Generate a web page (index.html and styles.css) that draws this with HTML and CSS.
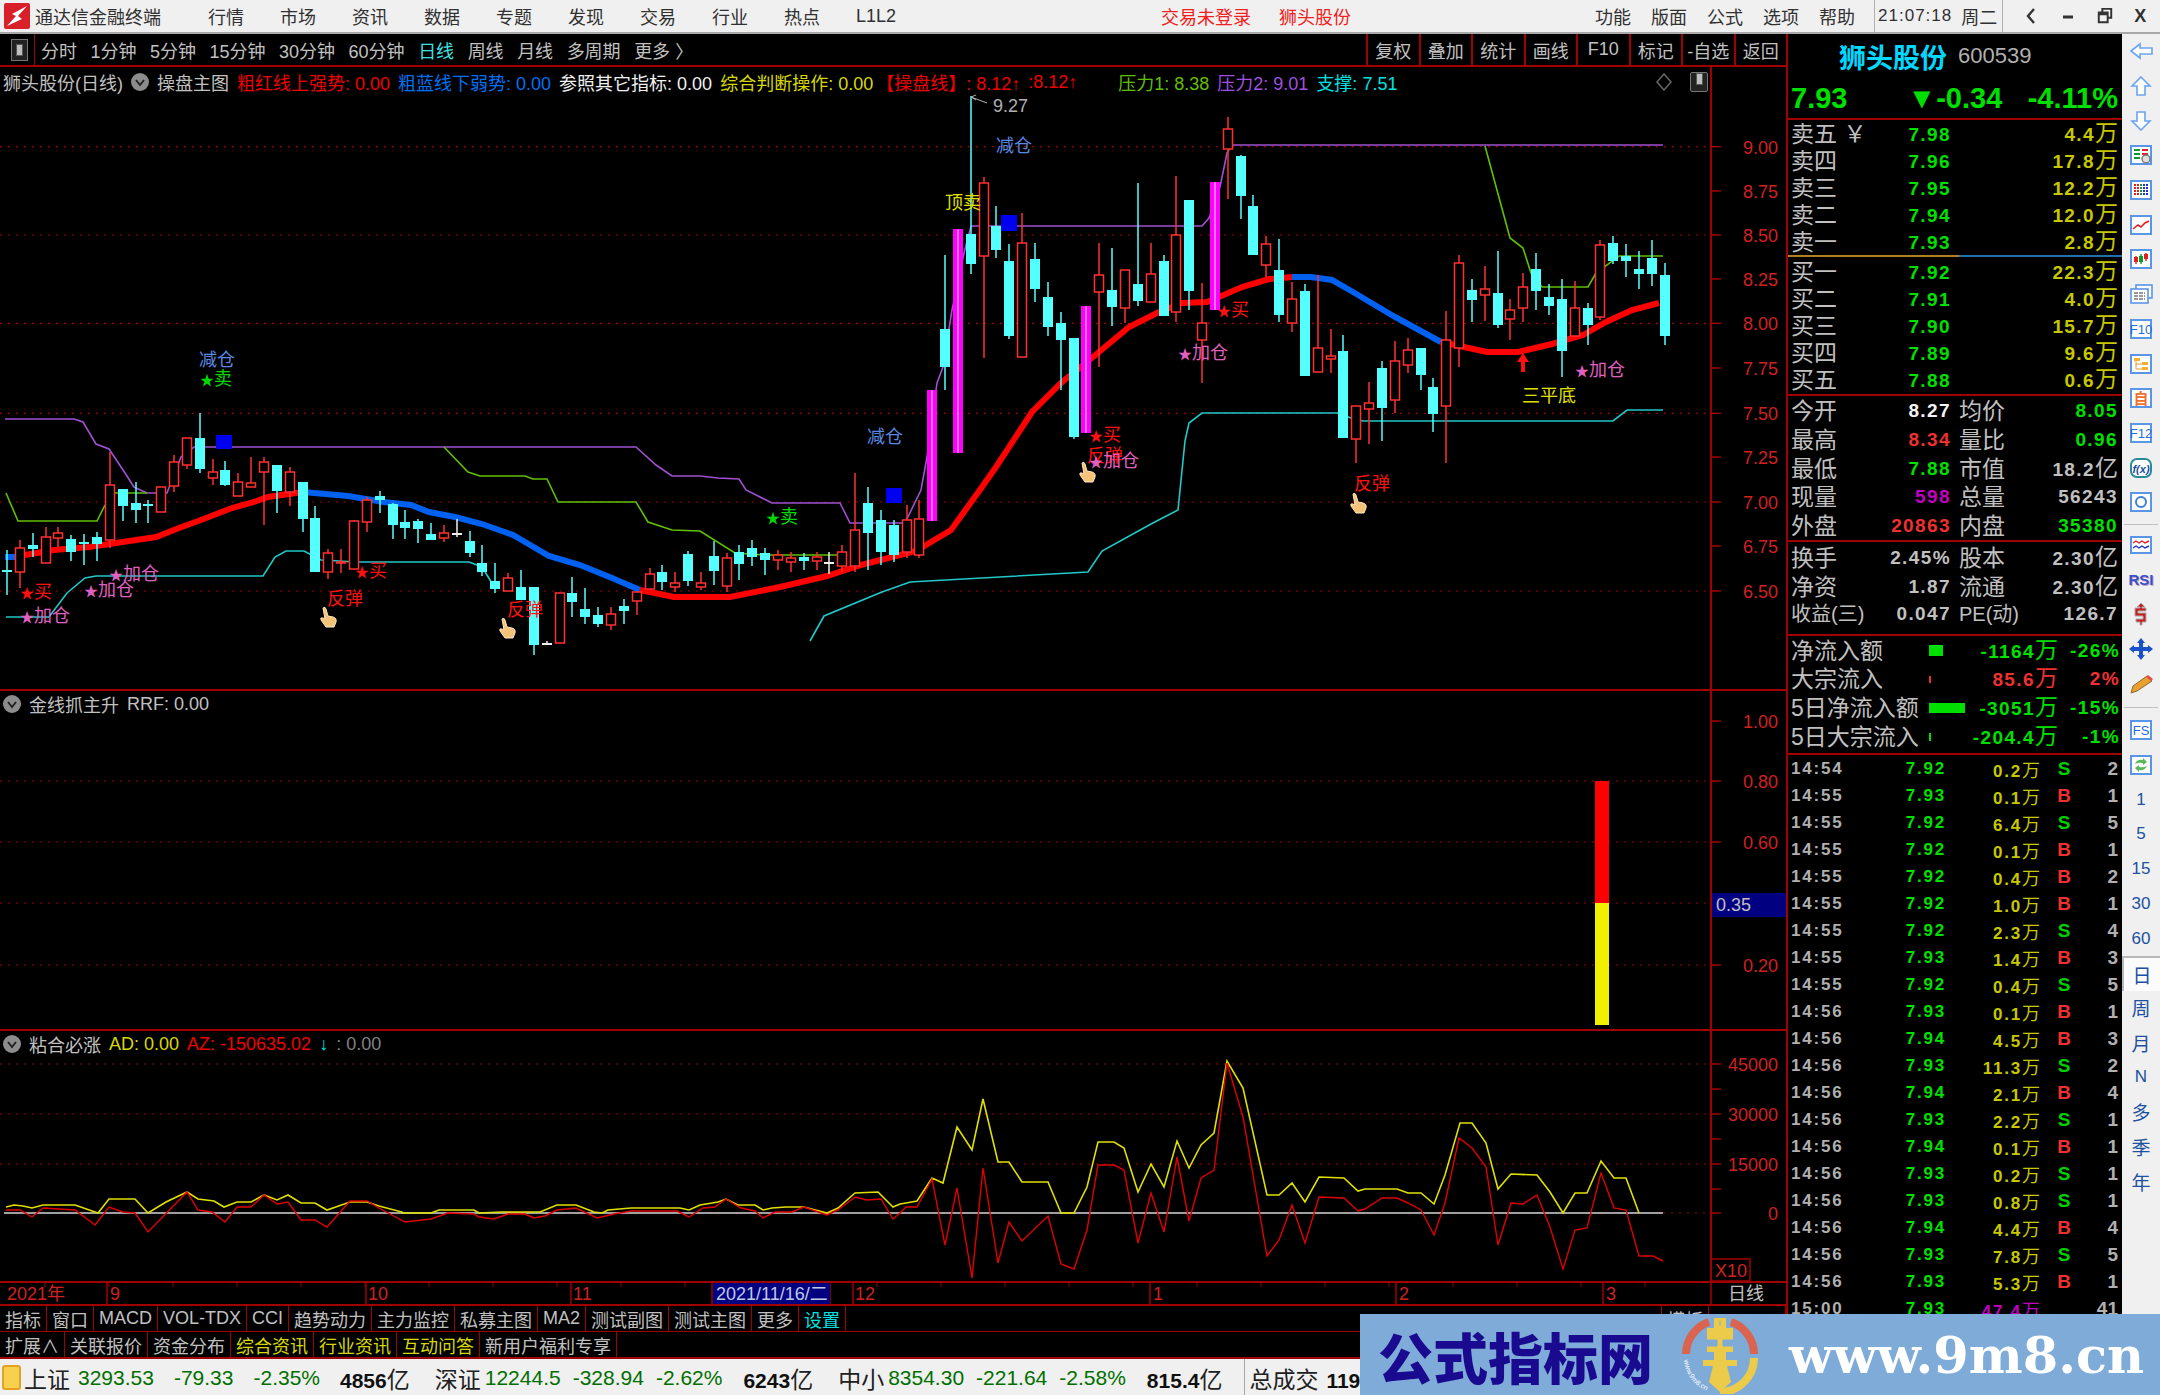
FILE: index.html
```html
<!DOCTYPE html>
<html>
<head>
    <title>通达信金融终端 - 狮头股份</title>
    <link rel="stylesheet" href="styles.css">
</head>
<body>
    <!-- Title bar -->
    <header class="topbar">
        <svg class="logo" viewBox="0 0 26 26">
            <rect width="26" height="26" rx="2" fill="#d8202a"/>
            <path d="M23 3 L8 11 L12 13 L3 23 L18 16 L14 13 Z" fill="#fff"/>
        </svg>
        <span class="app-name">通达信金融终端</span>
        <nav class="menu">
            <span>行情</span><span>市场</span><span>资讯</span><span>数据</span><span>专题</span>
            <span>发现</span><span>交易</span><span>行业</span><span>热点</span><span>L1L2</span>
        </nav>
        <span class="login">交易未登录</span>
        <span class="login stock">狮头股份</span>
        <nav class="menu menu-right">
            <span>功能</span><span>版面</span><span>公式</span><span>选项</span><span>帮助</span>
        </nav>
        <div class="clock">
            <span class="clock-time">21:07:18</span>
            <span>周二</span>
        </div>
        <div class="win-btns">
            <svg viewBox="0 0 14 20"><path d="M10 3 L4 10 L10 17" fill="none" stroke="#333" stroke-width="2.4"/></svg>
            <svg viewBox="0 0 14 20"><path d="M2 11 H12" stroke="#333" stroke-width="3"/></svg>
            <svg viewBox="0 0 18 20"><path d="M6 5 V2 H16 V12 H13 M2 6 H12 V17 H2 Z M2 8 H12" fill="none" stroke="#333" stroke-width="2.2"/></svg>
            <span>X</span>
        </div>
    </header>

    <div class="workspace">
        <!-- Chart side -->
        <main class="left">
            <div class="toolbar">
                <div class="toggle"><i></i></div>
                <div class="periods">
                    <span>分时</span><span>1分钟</span><span>5分钟</span><span>15分钟</span><span>30分钟</span><span>60分钟</span>
                    <span class="on">日线</span><span>周线</span><span>月线</span><span>多周期</span><span>更多 〉</span>
                </div>
                <div class="tool-btns">
                    <span>复权</span><span>叠加</span><span>统计</span><span>画线</span><span>F10</span><span>标记</span><span>-自选</span><span>返回</span>
                </div>
            </div>

            <section class="pane pane-main">
                <svg id="chart-main" class="plot" viewBox="0 67 1786 622"></svg>
                <div class="legend">
                    <span>狮头股份(日线)</span>
                    <svg class="chev" viewBox="0 0 18 18"><circle cx="9" cy="9" r="9" fill="#8c8c8c"/><path d="M5 7 L9 12 L13 7" fill="none" stroke="#222" stroke-width="2"/></svg>
                    <span>操盘主图</span>
                    <span class="red">粗红线上强势: 0.00</span>
                    <span class="blue">粗蓝线下弱势: 0.00</span>
                    <span class="white">参照其它指标: 0.00</span>
                    <span class="yellow">综合判断操作: 0.00</span>
                    <span class="red lead">【操盘线】: 8.12<b>↑</b></span>
                    <span class="red">:8.12<b>↑</b></span>
                    <span class="green far">压力1: 8.38</span>
                    <span class="purple">压力2: 9.01</span>
                    <span class="cyan">支撑: 7.51</span>
                    <svg class="diamond" viewBox="0 0 18 18"><path d="M9 1 L16 9 L9 17 L2 9 Z" fill="none" stroke="#666" stroke-width="1.5"/></svg>
                    <div class="toggle-sm"><i></i></div>
                </div>
            </section>

            <section class="pane pane-mid">
                <svg id="chart-mid" class="plot" viewBox="0 691 1786 338"></svg>
                <div class="legend legend-sub">
                    <svg class="chev" viewBox="0 0 18 18"><circle cx="9" cy="9" r="9" fill="#8c8c8c"/><path d="M5 7 L9 12 L13 7" fill="none" stroke="#222" stroke-width="2"/></svg>
                    <span>金线抓主升</span>
                    <span>RRF: 0.00</span>
                </div>
            </section>

            <section class="pane pane-low">
                <svg id="chart-low" class="plot" viewBox="0 1031 1786 250"></svg>
                <div class="legend legend-sub">
                    <svg class="chev" viewBox="0 0 18 18"><circle cx="9" cy="9" r="9" fill="#8c8c8c"/><path d="M5 7 L9 12 L13 7" fill="none" stroke="#222" stroke-width="2"/></svg>
                    <span>粘合必涨</span>
                    <span class="yellow">AD: 0.00</span>
                    <span class="red">AZ: -150635.02</span>
                    <span class="cyan"><b>↓</b></span>
                    <span class="dim">: 0.00</span>
                </div>
            </section>

            <svg id="date-axis" class="date-axis" viewBox="0 0 1786 21"></svg>

            <div class="tabs">
                <span>指标</span><span>窗口</span><span>MACD</span><span>VOL-TDX</span><span>CCI</span><span>趋势动力</span><span>主力监控</span>
                <span>私募主图</span><span>MA2</span><span>测试副图</span><span>测试主图</span><span>更多</span><span class="cyan">设置</span>
                <span class="tab-end">模板</span><span class="tab-blank"></span>
            </div>
            <div class="tabs tabs-low">
                <span>扩展∧</span><span>关联报价</span><span>资金分布</span><span class="yellow">综合资讯</span><span class="yellow">行业资讯</span>
                <span class="yellow">互动问答</span><span>新用户福利专享</span>
            </div>

            <footer class="status">
                <div class="status-ico"></div>
                <div class="idx"><em>上证</em><span>3293.53</span><span>-79.33</span><span>-2.35%</span><b>4856<em>亿</em></b></div>
                <div class="idx idx-tight"><em>深证</em><span>12244.5</span><span>-328.94</span><span>-2.62%</span><b>6243<em>亿</em></b></div>
                <div class="idx idx-tight"><em>中小</em><span>8354.30</span><span>-221.64</span><span>-2.58%</span><b>815.4<em>亿</em></b></div>
                <div class="idx idx-total"><em>总成交</em><b>1190<em>亿</em></b></div>
            </footer>
        </main>

        <!-- Quote panel -->
        <aside class="quote">
            <div class="q-name">狮头股份<span>600539</span></div>
            <div class="q-price">
                <span>7.93</span><span class="q-change">▼-0.34</span><span class="q-pct">-4.11%</span>
            </div>

            <div class="book">
                <div class="row"><span>卖五 ￥</span><b class="up-g">7.98</b><b class="vol">4.4<i>万</i></b></div>
                <div class="row"><span>卖四</span><b class="up-g">7.96</b><b class="vol">17.8<i>万</i></b></div>
                <div class="row"><span>卖三</span><b class="up-g">7.95</b><b class="vol">12.2<i>万</i></b></div>
                <div class="row"><span>卖二</span><b class="up-g">7.94</b><b class="vol">12.0<i>万</i></b></div>
                <div class="row"><span>卖一</span><b class="up-g">7.93</b><b class="vol">2.8<i>万</i></b></div>
            </div>
            <div class="book-sep"></div>
            <div class="book book-end">
                <div class="row"><span>买一</span><b class="up-g">7.92</b><b class="vol">22.3<i>万</i></b></div>
                <div class="row"><span>买二</span><b class="up-g">7.91</b><b class="vol">4.0<i>万</i></b></div>
                <div class="row"><span>买三</span><b class="up-g">7.90</b><b class="vol">15.7<i>万</i></b></div>
                <div class="row"><span>买四</span><b class="up-g">7.89</b><b class="vol">9.6<i>万</i></b></div>
                <div class="row"><span>买五</span><b class="up-g">7.88</b><b class="vol">0.6<i>万</i></b></div>
            </div>

            <div class="stats">
                <div class="stat"><span>今开</span><b class="white">8.27</b><span>均价</span><b class="up-g">8.05</b></div>
                <div class="stat"><span>最高</span><b class="hot">8.34</b><span>量比</span><b class="up-g">0.96</b></div>
                <div class="stat"><span>最低</span><b class="up-g">7.88</b><span>市值</span><b>18.2<i>亿</i></b></div>
                <div class="stat"><span>现量</span><b class="mag">598</b><span>总量</span><b>56243</b></div>
                <div class="stat"><span>外盘</span><b class="hot">20863</b><span>内盘</span><b class="up-g">35380</b></div>
            </div>
            <div class="stats stats-b">
                <div class="stat"><span>换手</span><b>2.45%</b><span>股本</span><b>2.30<i>亿</i></b></div>
                <div class="stat"><span>净资</span><b>1.87</b><span>流通</span><b>2.30<i>亿</i></b></div>
                <div class="stat"><span class="small">收益(三)</span><b>0.047</b><span class="small">PE(动)</span><b>126.7</b></div>
            </div>

            <div class="flows">
                <div class="flow"><span>净流入额</span><u class="bar bar-a"></u><b class="up-g">-1164<i>万</i></b><b class="up-g">-26%</b></div>
                <div class="flow"><span>大宗流入</span><u class="bar bar-b"></u><b class="hot">85.6<i>万</i></b><b class="hot">2%</b></div>
                <div class="flow"><span>5日净流入额</span><u class="bar bar-c"></u><b class="up-g">-3051<i>万</i></b><b class="up-g">-15%</b></div>
                <div class="flow"><span>5日大宗流入</span><u class="bar bar-d"></u><b class="up-g">-204.4<i>万</i></b><b class="up-g">-1%</b></div>
            </div>

            <div class="ticks">
                <div class="tick"><span>14:54</span><b>7.92</b><em>0.2<i>万</i></em><s>S</s><span>2</span></div>
                <div class="tick"><span>14:55</span><b>7.93</b><em>0.1<i>万</i></em><s class="buy">B</s><span>1</span></div>
                <div class="tick"><span>14:55</span><b>7.92</b><em>6.4<i>万</i></em><s>S</s><span>5</span></div>
                <div class="tick"><span>14:55</span><b>7.92</b><em>0.1<i>万</i></em><s class="buy">B</s><span>1</span></div>
                <div class="tick"><span>14:55</span><b>7.92</b><em>0.4<i>万</i></em><s class="buy">B</s><span>2</span></div>
                <div class="tick"><span>14:55</span><b>7.92</b><em>1.0<i>万</i></em><s class="buy">B</s><span>1</span></div>
                <div class="tick"><span>14:55</span><b>7.92</b><em>2.3<i>万</i></em><s>S</s><span>4</span></div>
                <div class="tick"><span>14:55</span><b>7.93</b><em>1.4<i>万</i></em><s class="buy">B</s><span>3</span></div>
                <div class="tick"><span>14:55</span><b>7.92</b><em>0.4<i>万</i></em><s>S</s><span>5</span></div>
                <div class="tick"><span>14:56</span><b>7.93</b><em>0.1<i>万</i></em><s class="buy">B</s><span>1</span></div>
                <div class="tick"><span>14:56</span><b>7.94</b><em>4.5<i>万</i></em><s class="buy">B</s><span>3</span></div>
                <div class="tick"><span>14:56</span><b>7.93</b><em>11.3<i>万</i></em><s>S</s><span>2</span></div>
                <div class="tick"><span>14:56</span><b>7.94</b><em>2.1<i>万</i></em><s class="buy">B</s><span>4</span></div>
                <div class="tick"><span>14:56</span><b>7.93</b><em>2.2<i>万</i></em><s>S</s><span>1</span></div>
                <div class="tick"><span>14:56</span><b>7.94</b><em>0.1<i>万</i></em><s class="buy">B</s><span>1</span></div>
                <div class="tick"><span>14:56</span><b>7.93</b><em>0.2<i>万</i></em><s>S</s><span>1</span></div>
                <div class="tick"><span>14:56</span><b>7.93</b><em>0.8<i>万</i></em><s>S</s><span>1</span></div>
                <div class="tick"><span>14:56</span><b>7.94</b><em>4.4<i>万</i></em><s class="buy">B</s><span>4</span></div>
                <div class="tick"><span>14:56</span><b>7.93</b><em>7.8<i>万</i></em><s>S</s><span>5</span></div>
                <div class="tick"><span>14:56</span><b>7.93</b><em>5.3<i>万</i></em><s class="buy">B</s><span>1</span></div>
                <div class="tick"><span>15:00</span><b>7.93</b><em class="mag">47.4<i>万</i></em><s></s><span>41</span></div>
            </div>
        </aside>

        <!-- Right icon strip -->
        <nav class="side">
            <div class="side-item"><svg viewBox="0 0 26 24"><path d="M3 12 L12 5 V9 H24 V15 H12 V19 Z" fill="#fff" stroke="#6aa4f2" stroke-width="1.6"/></svg></div>
            <div class="side-item"><svg viewBox="0 0 26 24"><path d="M13 3 L22 12 H17 V21 H9 V12 H4 Z" fill="#fff" stroke="#6aa4f2" stroke-width="1.6"/></svg></div>
            <div class="side-item"><svg viewBox="0 0 26 24"><path d="M13 21 L22 12 H17 V3 H9 V12 H4 Z" fill="#fff" stroke="#6aa4f2" stroke-width="1.6"/></svg></div>
            <div class="side-item"><svg viewBox="0 0 26 24"><rect x="3" y="3" width="20" height="18" fill="#fff" stroke="#5a96e8" stroke-width="2"/><path d="M6 7 H12 M6 11 H12 M6 15 H12" stroke="#0a9a30" stroke-width="2"/><path d="M14 7 H20 M14 11 H20" stroke="#e02020" stroke-width="2"/><circle cx="18" cy="16" r="4" fill="#ddd" stroke="#777" stroke-width="1.4"/></svg></div>
            <div class="side-item"><svg viewBox="0 0 26 24"><rect x="3" y="3" width="20" height="18" fill="#fff" stroke="#5a96e8" stroke-width="2"/><path d="M7 6 V18 M10 6 V18" stroke="#e02020" stroke-width="2" stroke-dasharray="2 1"/><path d="M13 6 V18" stroke="#0a9a30" stroke-width="2" stroke-dasharray="2 1"/><path d="M16 6 V18 M19 6 V18" stroke="#2030d0" stroke-width="2" stroke-dasharray="2 1"/></svg></div>
            <div class="side-item"><svg viewBox="0 0 26 24"><rect x="3" y="3" width="20" height="18" fill="#fff" stroke="#5a96e8" stroke-width="2"/><path d="M5 16 L10 12 L13 14 L17 10 L21 8" fill="none" stroke="#e02020" stroke-width="1.6"/></svg></div>
            <div class="side-item"><svg viewBox="0 0 26 24"><rect x="3" y="3" width="20" height="18" fill="#fff" stroke="#5a96e8" stroke-width="2"/><path d="M8 9 V17 M18 6 V14" stroke="#e02020" stroke-width="1.4"/><path d="M13 7 V17" stroke="#0a9a30" stroke-width="1.4"/><rect x="6" y="10" width="4" height="5" fill="#e02020"/><rect x="11" y="9" width="4" height="6" fill="#0a9a30"/><rect x="16" y="7" width="4" height="5" fill="#e02020"/></svg></div>
            <div class="side-item"><svg viewBox="0 0 26 24"><rect x="8" y="3" width="16" height="13" fill="#fff" stroke="#5a96e8" stroke-width="1.6"/><rect x="3" y="7" width="17" height="14" fill="#fff" stroke="#5a96e8" stroke-width="1.6"/><path d="M6 11 H17 M6 14 H17 M6 17 H17" stroke="#777" stroke-width="1.4" stroke-dasharray="4 1"/></svg></div>
            <div class="side-item"><svg viewBox="0 0 26 24"><rect x="3" y="3" width="20" height="18" fill="#fff" stroke="#5a96e8" stroke-width="2"/><text x="13" y="17" class="ico-text">F10</text></svg></div>
            <div class="side-item"><svg viewBox="0 0 26 24"><rect x="3" y="3" width="20" height="18" fill="#fff" stroke="#5a96e8" stroke-width="2"/><path d="M8 8 V17 H14 M8 12 H14" fill="none" stroke="#e0a030"/><rect x="6" y="6" width="6" height="3" fill="#f5b030"/><rect x="14" y="10" width="6" height="3" fill="#f5b030"/><rect x="14" y="15" width="6" height="3" fill="#f5b030"/></svg></div>
            <div class="side-item"><svg viewBox="0 0 26 24"><rect x="3" y="3" width="20" height="18" fill="#fff" stroke="#5a96e8" stroke-width="2"/><text x="13" y="18" class="ico-zi">自</text></svg></div>
            <div class="side-item"><svg viewBox="0 0 26 24"><rect x="3" y="3" width="20" height="18" fill="#fff" stroke="#5a96e8" stroke-width="2"/><text x="13" y="17" class="ico-text">F12</text></svg></div>
            <div class="side-item"><svg viewBox="0 0 26 24"><rect x="3" y="3" width="20" height="18" rx="6" fill="#fff" stroke="#2a8a9a" stroke-width="2"/><text x="13" y="17" class="ico-fx">f(x)</text></svg></div>
            <div class="side-item"><svg viewBox="0 0 26 24"><rect x="3" y="3" width="20" height="18" fill="#fff" stroke="#5a96e8" stroke-width="2"/><circle cx="13" cy="12" r="5" fill="none" stroke="#3a80d8" stroke-width="2"/></svg></div>
            <div class="side-sep"></div>
            <div class="side-item"><svg viewBox="0 0 26 24"><rect x="3" y="4" width="20" height="16" fill="#fff" stroke="#5a96e8" stroke-width="2"/><path d="M5 10 L8 8 L11 10 L14 8 L17 10 L21 8" fill="none" stroke="#e02020" stroke-width="1.4"/><path d="M5 15 L8 13 L11 15 L14 13 L17 15 L21 13" fill="none" stroke="#2030d0" stroke-width="1.4"/></svg></div>
            <div class="side-item"><span class="rsi">RSI</span></div>
            <div class="side-item"><svg viewBox="0 0 26 24"><path d="M13 1 L17 5 H14 V6 H18 V9 H10 V11 H18 V20 H14 V23 H12 V20 H8 V17 H15 V14 H7 V6 H12 V5 H9 Z" fill="#c82020" stroke="#aaa" stroke-width="1"/></svg></div>
            <div class="side-item"><svg viewBox="0 0 26 24"><path d="M13 1 L17 6 H15 V10 H20 V8 L25 12 L20 16 V14 H15 V18 H17 L13 23 L9 18 H11 V14 H6 V16 L1 12 L6 8 V10 H11 V6 H9 Z" fill="#1a50c8"/></svg></div>
            <div class="side-item"><svg viewBox="0 0 26 24"><path d="M3 21 L5 14 L19 4 L24 9 L9 19 Z" fill="#e8a030" stroke="#8a6a30"/><path d="M18 5 L20 3 L25 7 L23 9 Z" fill="#e05050"/></svg></div>
            <div class="side-sep side-sep-b"></div>
            <div class="side-item"><svg viewBox="0 0 26 24"><rect x="3" y="3" width="20" height="18" fill="#fff" stroke="#5a96e8" stroke-width="2"/><text x="13" y="17" class="ico-text">FS</text></svg></div>
            <div class="side-item"><svg viewBox="0 0 26 24"><rect x="3" y="3" width="20" height="18" fill="#fff" stroke="#5a96e8" stroke-width="2"/><path d="M7 11 Q9 6 15 7 L15 5 L19 9 L15 12 L15 10 Q10 9 7 11 Z M19 13 Q17 18 11 17 L11 19 L7 15 L11 12 L11 14 Q16 15 19 13 Z" fill="#58b858"/></svg></div>
            <div class="side-item side-num">1</div>
            <div class="side-item side-num">5</div>
            <div class="side-item side-num">15</div>
            <div class="side-item side-num">30</div>
            <div class="side-item side-num">60</div>
            <div class="side-item side-cn side-on">日</div>
            <div class="side-item side-cn">周</div>
            <div class="side-item side-cn">月</div>
            <div class="side-item side-num">N</div>
            <div class="side-item side-cn">多</div>
            <div class="side-item side-cn">季</div>
            <div class="side-item side-cn">年</div>
        </nav>
    </div>

    <!-- Site watermark over the bottom right corner -->
    <div class="mark">
        <span class="mark-name">公式指标网</span>
        <svg class="mark-logo" viewBox="0 0 78 78">
            <path d="M5 38 A34 34 0 0 1 28 6" fill="none" stroke="#d9644f" stroke-width="8"/>
            <path d="M50 6 A34 34 0 0 1 73 38" fill="none" stroke="#d9644f" stroke-width="8"/>
            <path d="M73 42 A34 34 0 0 1 39 76" fill="none" stroke="#eccb4a" stroke-width="8"/>
            <path d="M33 2 H45 V12 H52 V36 H45 V44 H56 V50 H46 L50 66 L39 76 L28 66 L32 50 H22 V44 H33 V36 H26 V12 H33 Z" fill="#eccb4a"/>
            <path d="M26 24 H36 V30 H26 Z M42 24 H52 V30 H42 Z M39 5 V10" fill="#7fabd8" stroke="#7fabd8"/>
            <path id="mark-low" d="M3 44 A36 36 0 0 0 30 76" fill="none"/>
            <text class="mark-small"><textPath href="#mark-low">www.9m8.cn</textPath></text>
        </svg>
        <span class="mark-url">www.9m8.cn</span>
    </div>

    <script src="chart.js"></script>
</body>
</html>
```

FILE: styles.css
```css
body {
    margin: 0;
    width: 2160px;
    height: 1395px;
    overflow: hidden;
    position: relative;
    background-color: #000;
    color: #c0c0c0;
    font-family: "Liberation Sans", "Noto Sans CJK SC", sans-serif;
    font-size: 18px;
}

i, em, s, u {
    font-style: normal;
    text-decoration: none;
}

/* Colours shared by legends and tabs */
.red { color: #f00000; }
.blue { color: #0070f0; }
.white { color: #f0f0f0; }
.yellow { color: #d8d800; }
.green { color: #60c000; }
.purple { color: #a050e0; }
.cyan { color: #00e0e0; }
.dim { color: #808080; }

/* Title bar */
.topbar {
    height: 32px;
    border-bottom: 2px solid #a8a8a8;
    background-color: #f0f0f0;
    color: #303030;
    display: flex;
    align-items: center;
    white-space: nowrap;
}

.logo {
    width: 26px;
    height: 26px;
    margin-left: 4px;
}

.app-name {
    margin-left: 5px;
}

.menu {
    display: flex;
    align-items: center;
    gap: 36px;
    margin-left: 47px;
}

.menu-right {
    gap: 20px;
    margin-left: 244px;
}

.login {
    color: #f02020;
    margin-left: 265px;
}

.login.stock {
    margin-left: 28px;
}

.clock {
    display: flex;
    align-items: center;
    gap: 9px;
    height: 32px;
    margin-left: 19px;
    padding: 0 5px 0 3px;
    border-left: 1px solid #b0b0b0;
    border-right: 1px solid #b0b0b0;
}

.clock-time {
    font-size: 17px;
    letter-spacing: 1px;
}

.win-btns {
    display: flex;
    align-items: center;
    gap: 21px;
    margin-left: 20px;
    font-weight: bold;
}

.win-btns svg {
    width: 16px;
    height: 20px;
}

/* Period toolbar */
.workspace {
    display: flex;
    height: 1361px;
}

.left {
    width: 1786px;
    border-right: 2px solid #a00000;
    flex-shrink: 0;
}

.toolbar {
    height: 31px;
    border-bottom: 2px solid #a00000;
    display: flex;
    align-items: center;
    white-space: nowrap;
}

.toggle {
    width: 34px;
    height: 31px;
    border-right: 1px solid #a00000;
    display: flex;
    align-items: center;
    justify-content: center;
}

.toggle i, .toggle-sm i {
    display: block;
    width: 5px;
    height: 10px;
    margin-left: 5px;
    background-color: #c0c0c0;
    border: 1px solid #555;
}

.toggle i {
    box-shadow: 0 0 0 4px #222, 0 0 0 5px #777;
}

.toggle-sm {
    width: 16px;
    height: 18px;
    margin-left: 9px;
    border: 1px solid #777;
    border-radius: 2px;
    background-color: #222;
}

.periods {
    display: flex;
    gap: 13.5px;
    margin-left: 6px;
}

.periods .on {
    color: #40e0e0;
}

.tool-btns {
    display: flex;
    margin-left: auto;
}

.tool-btns span {
    width: 52.5px;
    height: 31px;
    box-sizing: border-box;
    border-left: 2px solid #a00000;
    display: flex;
    align-items: center;
    justify-content: center;
}

/* Chart panes */
.pane {
    position: relative;
    border-bottom: 2px solid #a00000;
}

.pane-main { height: 622px; }
.pane-mid { height: 338px; }
.pane-low { height: 250px; }

.plot {
    position: absolute;
    top: 0;
    left: 0;
    width: 1786px;
    height: 100%;
}

.legend {
    position: relative;
    width: 1705px;
    height: 30px;
    padding-left: 3px;
    display: flex;
    align-items: center;
    gap: 8px;
    white-space: nowrap;
}

.legend-sub {
    height: 26px;
}

.chev {
    width: 18px;
    height: 18px;
    flex-shrink: 0;
}

.lead {
    margin-left: -5px;
}

.far {
    margin-left: 33px;
}

.diamond {
    width: 18px;
    height: 18px;
    margin-left: auto;
}

.plot text {
    font-family: "Liberation Sans", "Noto Sans CJK SC", sans-serif;
    font-size: 18px;
}

.date-axis {
    display: block;
    width: 1786px;
    height: 21px;
    border-bottom: 2px solid #a00000;
    font-size: 18px;
}

/* Bottom tabs */
.tabs {
    height: 25px;
    border-bottom: 1px solid #a00000;
    display: flex;
    white-space: nowrap;
}

.tabs span {
    padding: 0 5px;
    border-right: 1px solid #a00000;
    display: flex;
    align-items: center;
}

.tabs .tab-end {
    margin-left: auto;
    border-left: 1px solid #a00000;
}

.tabs .tab-blank {
    width: 66px;
}

.tabs-low {
    height: 25px;
    border-bottom: 2px solid #a00000;
}

.status {
    height: 37px;
    background-color: #f0f0f0;
    color: #006f00;
    font-size: 21px;
    display: flex;
    align-items: center;
    gap: 25px;
    white-space: nowrap;
}

.status-ico {
    width: 15px;
    height: 21px;
    margin-left: 2px;
    margin-right: -22px;
    border: 2px solid #e8a020;
    border-radius: 3px;
    background-color: #f8d050;
}

.idx {
    display: flex;
    align-items: center;
    gap: 20px;
}

.idx em {
    color: #202020;
    font-size: 23px;
    margin-right: -12px;
}

.idx b {
    color: #101010;
}

.idx b em {
    font-weight: normal;
    margin-right: 0;
}

.idx-tight {
    gap: 12px;
}

.idx-tight em {
    margin-right: -8px;
}

.idx-tight b {
    margin-left: 9px;
}

.idx-total {
    margin-left: -3px;
    padding-left: 4px;
    height: 37px;
    border-left: 1px solid #aaa;
}

/* Quote panel */
.quote {
    width: 334px;
    flex-shrink: 0;
    box-sizing: border-box;
    font-size: 23px;
}

.q-name {
    height: 44px;
    padding-left: 51px;
    display: flex;
    align-items: center;
    color: #00d8ff;
    font-size: 27px;
    font-weight: bold;
}

.q-name span {
    margin-left: 11px;
    color: #b0b0b0;
    font-size: 22px;
    font-weight: normal;
}

.q-price {
    height: 40px;
    padding: 0 4px 0 3px;
    border-bottom: 2px solid #a00000;
    display: flex;
    align-items: center;
    color: #00e000;
    font-size: 29px;
    font-weight: bold;
}

.q-change {
    margin-left: 60px;
}

.q-pct {
    margin-left: auto;
}

.book {
    padding: 0 4px 0 3px;
}

.book-sep {
    height: 2px;
    margin-bottom: 1px;
    background: linear-gradient(to right, #b08020 0, #b08020 171px, #2070b0 171px);
}

.book-end {
    border-bottom: 2px solid #a00000;
    padding-bottom: 1px;
    padding-top: 0;
    margin-left: 0;
    height: 135px;
}

.row {
    height: 27px;
    display: grid;
    grid-template-columns: 70px 90px 1fr;
    align-items: center;
    line-height: 27px;
    white-space: nowrap;
}

.row b, .stat b, .flow b {
    text-align: right;
    font-size: 19px;
    letter-spacing: 1.4px;
}

.row i, .stat i, .flow i {
    font-size: 23px;
    font-weight: normal;
    letter-spacing: 0;
}

.up-g { color: #00e000; }
.hot { color: #f03030; }
.mag { color: #c000c0; }
.vol { color: #c8c800; }

.stats {
    padding: 1px 4px 0 3px;
    border-bottom: 2px solid #a00000;
}

.stats-b {
    padding-bottom: 5px;
}

.stat {
    height: 28.6px;
    display: grid;
    grid-template-columns: 70px 90px 8px 60px 1fr;
    align-items: center;
    line-height: 28px;
    white-space: nowrap;
}

.stat span:nth-of-type(2) {
    grid-column: 4;
}

.stat b {
    color: #c0c0c0;
}

.stat .white { color: #f4f4f4; }
.stat .up-g { color: #00e000; }
.stat .hot { color: #f03030; }
.stat .mag { color: #c000c0; }

.small {
    font-size: 20px;
}

.flows {
    padding: 0 2px 3px 3px;
    border-bottom: 2px solid #a00000;
}

.flow {
    height: 28.6px;
    display: grid;
    grid-template-columns: 138px 36px 93px 1fr;
    align-items: center;
    line-height: 28px;
    white-space: nowrap;
}

.bar {
    display: block;
}

.bar-a { width: 14px; height: 11px; background-color: #00e000; }
.bar-b { width: 2px; height: 7px; background-color: #f03030; }
.bar-c { width: 36px; height: 10px; background-color: #00e000; }
.bar-d { width: 2px; height: 8px; background-color: #00e000; }

.tick {
    height: 27px;
    padding: 0 4px 0 3px;
    display: grid;
    grid-template-columns: 70px 85px 94px 48px 1fr;
    align-items: center;
    font-size: 17px;
    font-weight: bold;
    letter-spacing: 1.8px;
    white-space: nowrap;
}

.tick span {
    color: #b0b0b0;
}

.tick span:last-child {
    text-align: right;
    letter-spacing: 0;
    font-size: 19px;
}

.tick b {
    text-align: right;
    color: #00e000;
}

.tick em {
    text-align: right;
    color: #c8c800;
}

.tick em.mag {
    color: #c000c0;
}

.tick i {
    font-size: 18px;
    font-weight: normal;
    letter-spacing: 0;
}

.tick s {
    text-align: center;
    color: #00d000;
    letter-spacing: 0;
    font-size: 19px;
}

.tick s.buy {
    color: #f03030;
}

/* Right icon strip */
.side {
    width: 38px;
    height: 1361px;
    background-color: #f0f0f0;
    flex-shrink: 0;
}

.side-item {
    height: 34.7px;
    display: flex;
    align-items: center;
    justify-content: center;
}

.side-item svg {
    width: 26px;
    height: 24px;
}

.side-sep {
    height: 1px;
    margin: 4px 2px 3px;
    background-color: #c0c0c0;
}

.side-sep-b {
    margin: 6px 2px 5px;
}

.side-num {
    color: #2050a0;
    font-size: 17px;
}

.side-cn {
    color: #2050a0;
    font-size: 19px;
}

.side-on {
    background-color: #fbfbfb;
    border-top: 2px solid #b8b8b8;
    border-left: 2px solid #b8b8b8;
    box-sizing: border-box;
}

.ico-text {
    fill: #2a6ad8;
    font-size: 13px;
    text-anchor: middle;
}

.ico-zi {
    fill: #f07030;
    font-size: 15px;
    font-weight: bold;
    text-anchor: middle;
}

.ico-fx {
    fill: #1a50a0;
    font-size: 11px;
    font-style: italic;
    font-weight: bold;
    text-anchor: middle;
}

.rsi {
    color: #3a50c8;
    font-size: 15px;
    font-weight: bold;
    text-shadow: 1px 1px 0 #c8a0c0;
}

/* Watermark */
.mark {
    position: absolute;
    right: 0;
    bottom: 0;
    width: 800px;
    height: 81px;
    background-color: #7fabd8;
    display: flex;
    align-items: center;
}

.mark-name {
    width: 275px;
    margin-left: 18px;
    color: #1a0a90;
    font-family: "Noto Sans CJK SC", sans-serif;
    font-size: 55px;
    font-weight: 900;
    line-height: 60px;
    white-space: nowrap;
}

.mark-logo {
    width: 78px;
    height: 78px;
    margin-left: 28px;
}

.mark-small {
    fill: #fff;
    font-size: 7px;
    font-family: "Liberation Sans", sans-serif;
}

.mark-url {
    margin-left: 30px;
    color: #fff;
    font-family: "DejaVu Serif", serif;
    font-size: 51px;
    font-weight: bold;
    white-space: nowrap;
}
```

FILE: chart.js
```js
// Candles of the main pane: type, high, body top, body bottom, low (page pixels)
var candles = [
    ['d',550,570,571,595],['u',540,548,572,588],['d',533,545,549,557],['u',527,537,563,563],['u',527,533,538,547],
    ['d',535,539,552,561],['d',534,542,543,565],['d',532,537,544,561],['u',452,485,540,548],['d',489,489,506,521],
    ['d',482,503,510,523],['d',500,504,505,523],['u',487,487,512,512],['u',455,462,486,492],['u',438,438,465,469],
    ['d',413,438,469,473],['u',459,472,478,485],['d',461,470,485,486],['u',473,482,496,496],['u',457,483,487,487],
    ['u',457,462,472,525],['d',465,465,491,513],['u',467,472,492,506],['d',482,482,519,532],['d',506,518,572,572],
    ['u',549,553,572,579],['u',549,562,563,573],['u',520,521,569,569],['u',497,500,522,532],['d',491,496,500,513],
    ['d',503,504,525,539],['d',510,522,528,539],['d',519,521,529,543],['d',523,534,540,540],['u',525,533,538,542],
    ['w',519,533,534,537],['d',531,541,553,557],['d',545,563,572,576],['d',563,581,589,593],['u',573,578,591,591],
    ['d',570,587,600,600],['d',587,587,645,655],['w',641,643,644,645],['u',593,593,643,643],['d',577,593,602,617],
    ['d',588,609,617,624],['d',607,615,624,627],['u',607,614,625,630],['d',599,606,611,624],['u',592,592,601,615],
    ['u',568,574,589,589],['d',565,572,582,590],['u',572,583,587,592],['d',551,554,581,586],['u',572,583,587,590],
    ['d',541,556,571,585],['u',553,558,586,592],['d',545,552,564,580],['d',540,548,557,566],['d',548,553,560,575],
    ['u',550,555,560,570],['u',552,558,562,572],['d',553,557,561,570],['u',552,557,561,570],['w',552,562,563,574],
    ['u',545,552,566,572],['u',473,530,566,572],['d',487,503,533,570],['d',510,520,552,565],['d',520,525,555,562],
    ['u',505,520,552,558],['u',500,519,555,558],['m',390,390,521,521],['d',255,329,367,390],['m',229,229,453,453],
    ['d',96,234,264,274],['u',177,183,256,358],['d',206,226,250,258],['d',244,261,336,339],['u',213,243,357,357],
    ['d',243,259,289,302],['d',282,297,327,336],['d',312,323,340,390],['d',338,338,437,439],['m',306,306,433,433],
    ['u',243,275,292,367],['d',248,290,307,326],['u',270,270,308,323],['d',183,284,301,306],['u',243,274,302,302],
    ['d',255,261,316,316],['u',176,235,312,322],['d',200,200,291,310],['u',283,323,340,383],['m',182,182,310,310],
    ['u',117,129,149,199],['d',155,156,196,219],['d',195,206,255,255],['u',236,244,265,277],['d',239,270,315,322],
    ['u',282,299,323,332],['d',284,291,376,376],['u',275,348,372,372],['u',329,356,359,373],['d',335,351,438,438],
    ['u',406,406,439,463],['u',382,403,409,444],['d',361,368,408,441],['u',341,361,400,413],['u',338,350,365,373],
    ['d',348,348,375,390],['d',378,387,414,432],['u',311,340,406,463],['u',255,263,348,367],['d',279,290,300,322],
    ['u',266,289,295,321],['d',251,293,325,328],['u',299,310,319,340],['u',273,287,308,322],['d',253,269,291,310],
    ['d',284,297,306,315],['d',279,299,351,377],['u',281,308,336,336],['d',303,308,325,345],['u',240,245,317,320],
    ['d',236,243,261,264],['d',244,256,261,277],['d',251,269,274,289],['d',240,258,274,286],['d',263,275,336,345]
];

var RED_THICK = '#ff0000', BLUE_THICK = '#0060f0';
var LINE_RED = '#a00000', AXIS_TEXT = '#d02020';

function pts(list) {
    return list.map(function(p) { return p[0] + ',' + p[1]; }).join(' ');
}

function line(list, color, width) {
    return '<polyline points="' + pts(list) + '" fill="none" stroke="' + color + '" stroke-width="' + (width || 1.6) + '"/>';
}

function rect(x, y, w, h, color) {
    return '<rect x="' + x + '" y="' + y + '" width="' + w + '" height="' + h + '" fill="' + color + '"/>';
}

function text(x, y, str, color, anchor) {
    return '<text x="' + x + '" y="' + y + '" fill="' + color + '"' + (anchor ? ' text-anchor="' + anchor + '"' : '') + '>' + str + '</text>';
}

// dotted grid line plus axis tick
function grid(y, toX) {
    return '<line x1="' + (toX || 0) + '" x2="1711" y1="' + y + '" y2="' + y + '" stroke="#a00000" stroke-width="1.2" stroke-dasharray="2 6"/>' + tick(y);
}

function tick(y) {
    return '<line x1="1711" x2="1721" y1="' + y + '" y2="' + y + '" stroke="' + LINE_RED + '" stroke-width="1.5"/>';
}

function axisLine(y1, y2) {
    return '<line x1="1711" x2="1711" y1="' + y1 + '" y2="' + y2 + '" stroke="' + LINE_RED + '" stroke-width="2"/>';
}

function axisLabel(y, str) {
    return text(1778, y + 7, str, AXIS_TEXT, 'end');
}

function candle(c, i) {
    var x = Math.round(7 + 12.85 * i);
    var type = c[0];
    var out = '';
    if (type == 'u') {
        out += '<line x1="' + x + '" x2="' + x + '" y1="' + c[1] + '" y2="' + c[4] + '" stroke="#ff3030" stroke-width="1.5"/>';
        out += '<rect x="' + (x - 4.5) + '" y="' + c[2] + '" width="9" height="' + (c[3] - c[2]) + '" fill="#000" stroke="#ff3030" stroke-width="1.5"/>';
    } else if (type == 'm') {
        out += rect(x - 5, c[2], 10, c[3] - c[2], '#ff00ff');
        out += rect(x - 1, c[2], 2, c[3] - c[2], '#ff70ff');
    } else {
        var col = type == 'w' ? '#f0f0f0' : '#54ffff';
        out += '<line x1="' + x + '" x2="' + x + '" y1="' + c[1] + '" y2="' + c[4] + '" stroke="' + col + '" stroke-width="1.5"/>';
        out += rect(x - 5, c[2], 10, Math.max(c[3] - c[2], 2), col);
    }
    return out;
}

// markers on the price chart
function tag(x, y, str, color) {
    return text(x, y + 7, str, color);
}

function starTag(x, y, str, color) {
    return '<text x="' + x + '" y="' + (y + 7) + '" fill="' + color + '"><tspan class="star" font-size="14">★</tspan>' + str + '</text>';
}

function hand(x, y) {
    return '<path transform="translate(' + x + ',' + y + ')" d="M3 1 q2 -2 3 1 l2 7 l5 1 q4 1 3 5 l-2 5 h-8 l-5 -7 q-1 -3 2 -2 l2 1 z" fill="#f5c27a" stroke="#ffe8c0" stroke-width="1"/>';
}

function blueBox(x, y, w, h) {
    return rect(x, y, w, h, '#0000f0');
}

function drawMain() {
    var s = '';
    var levels = [[146.7,'9.00'],[191,'8.75'],[235,'8.50'],[279,'8.25'],[323.3,'8.00'],[368,'7.75'],[413.3,'7.50'],[457,'7.25'],[502,'7.00'],[546,'6.75'],[591,'6.50']];
    levels.forEach(function(l, i) {
        s += i % 2 == 0 ? grid(l[0]) : tick(l[0]);
        s += axisLabel(l[0], l[1]);
    });
    s += axisLine(67, 689);

    // pressure and support lines
    var purple = '#a050d0', green = '#60c000', teal = '#20c8c8';
    s += line([[5,419],[74,419],[83,422],[96,444],[109,449],[125,473],[134,487],[147,493],[167,493],[181,457],[194,447],[636,447],[656,465],[672,476],[700,476],[718,478],[739,479],[746,490],[772,503],[840,503],[850,523],[905,523],[921,490],[927,457],[937,383],[943,367],[952,310],[964,253],[971,226],[1202,226],[1209,218],[1220,187],[1227,153],[1232,145],[1663,145]], purple);
    s += line([[6,493],[18,521],[97,521],[104,507],[114,493],[147,493]], green);
    s += line([[444,447],[468,472],[480,476],[525,476],[533,479],[547,479],[558,502],[636,502],[648,522],[672,530],[700,531],[735,553],[765,555],[843,555]], green);
    s += line([[1485,146],[1510,238],[1523,248],[1531,273],[1542,287],[1588,287],[1596,273],[1619,256],[1663,256]], green);
    s += line([[6,617],[49,617],[67,593],[85,578],[96,576],[263,576],[275,557],[286,551],[304,551],[321,560],[357,562],[469,562],[482,567],[495,588]], teal);
    s += line([[810,641],[824,616],[882,592],[910,582],[1088,572],[1102,551],[1151,524],[1178,510],[1185,441],[1189,423],[1202,413],[1338,413],[1351,418],[1363,421],[1613,421],[1627,410],[1663,410]], teal);

    // thick trend line
    s += line([[5,557],[16,557]], BLUE_THICK, 6);
    s += line([[25,555],[54,550],[89,547],[116,543],[156,537],[179,528],[201,520],[232,508],[254,502],[268,497],[303,492]], RED_THICK, 6);
    s += line([[303,492],[348,496],[384,502],[411,505],[429,512],[455,517],[482,524],[513,535],[549,556],[580,565],[612,578],[640,590]], BLUE_THICK, 6);
    s += line([[640,590],[674,597],[700,597],[730,597],[780,587],[827,576],[861,565],[916,551],[951,530],[982,487],[996,467],[1032,412],[1061,383],[1093,357],[1129,327],[1157,313],[1182,303],[1207,302],[1219,297],[1242,287],[1269,279],[1292,277]], RED_THICK, 6);
    s += line([[1292,277],[1311,277],[1332,280],[1353,292],[1395,317],[1441,342]], BLUE_THICK, 6);
    s += line([[1441,342],[1464,347],[1487,352],[1518,352],[1552,344],[1583,335],[1606,322],[1632,310],[1659,303]], RED_THICK, 6);

    candles.forEach(function(c, i) { s += candle(c, i); });

    // buy, sell and note markers
    var pink = '#e060c0', note = '#5a88e0', buy = '#ff1010';
    s += tag(199, 359, '减仓', note) + starTag(200, 378, '卖', '#00d800');
    s += tag(867, 436, '减仓', note) + tag(996, 145, '减仓', note);
    s += starTag(766, 516, '卖', '#00d800');
    s += starTag(20, 591, '买', buy) + starTag(20, 615, '加仓', pink);
    s += starTag(84, 589, '加仓', pink) + starTag(109, 573, '加仓', pink);
    s += starTag(355, 570, '买', buy) + tag(327, 598, '反弹', buy) + hand(320, 607);
    s += tag(507, 609, '反弹', buy) + hand(499, 618);
    s += starTag(1089, 434, '买', buy) + tag(1087, 455, '反弹', buy) + starTag(1089, 460, '加仓', pink) + hand(1079, 462);
    s += starTag(1178, 352, '加仓', pink) + starTag(1217, 309, '买', buy);
    s += starTag(1575, 369, '加仓', pink) + tag(1522, 395, '三平底', '#e0e000');
    s += tag(1354, 483, '反弹', buy) + hand(1350, 493);
    s += tag(945, 202, '顶卖', '#e0e000');
    s += blueBox(216, 435, 16, 14) + blueBox(1001, 215, 16, 16) + blueBox(886, 488, 16, 15);
    s += '<path d="M1523 353 L1517 362 H1521 V372 H1525 V362 H1529 Z" fill="#ff1010"/>';
    s += '<path d="M971 97 L976 95 M971 97 L976 100 M971 97 L987 103" stroke="#b0b0b0" fill="none"/>';
    s += text(993, 112, '9.27', '#b0b0b0');

    document.getElementById('chart-main').innerHTML = s;
}

function drawMid() {
    var s = '';
    s += grid(781) + grid(842) + grid(903) + grid(965);
    s += tick(721);
    s += axisLabel(721, '1.00') + axisLabel(781, '0.80') + axisLabel(842, '0.60') + axisLabel(965, '0.20');
    s += axisLine(691, 1029);
    s += rect(1712, 893, 74, 24, '#000080') + text(1716, 911, '0.35', '#c0c0c0');
    s += rect(1595, 781, 14, 122, '#ff0000') + rect(1595, 903, 14, 122, '#f0f000');
    document.getElementById('chart-mid').innerHTML = s;
}

// curves of the lower pane, read from the picture: x*1.742, (y-1020)*3
var lowA = {
    yellow: [[10,562],[25,555],[40,558],[55,565],[75,555],[130,555],[165,575],[170,578],[190,537],[235,537],[258,578],[290,545],[325,517],[345,537],[372,543],[390,560],[412,547],[438,547],[460,525],[482,540],[502,525],[525,550],[548,550],[570,570],[610,545],[640,545],[660,558],[700,575],[700,578],[750,578],[765,570],[825,570],[835,578],[875,575],[940,575],[970,555],[1003,555],[1035,575],[1048,578],[1060,570],[1100,565],[1185,565],[1200,570],[1220,555],[1250,547],[1265,538],[1285,555],[1315,555],[1330,570],[1345,565],[1370,560],[1400,560],[1440,578],[1460,565],[1490,520],[1530,517],[1555,562],[1568,552]],
    red: [[10,570],[35,570],[55,590],[75,565],[130,570],[165,615],[190,560],[215,575],[235,578],[258,635],[325,517],[345,570],[370,575],[392,607],[412,562],[438,560],[460,525],[482,552],[502,545],[525,600],[548,600],[570,622],[610,542],[640,542],[660,565],[705,607],[750,597],[780,580],[825,582],[835,592],[860,598],[885,582],[915,582],[930,593],[950,588],[970,570],[1003,565],[1040,593],[1070,582],[1100,572],[1180,572],[1200,592],[1225,565],[1245,562],[1265,538],[1290,565],[1315,572],[1330,593],[1350,575],[1380,575],[1400,560],[1440,585],[1460,570],[1490,530],[1510,540],[1535,537],[1555,598],[1568,578]]
};
var lowB = {
    yellow: [[0,552],[10,548],[30,543],[55,475],[75,490],[100,322],[125,390],[145,237],[170,425],[190,425],[213,485],[258,485],[280,578],[303,578],[325,500],[345,367],[372,367],[390,385],[415,515],[438,433],[460,500],[482,362],[503,445],[525,375],[547,340],[570,122],[597,205],[640,525],[660,525],[683,488],[705,545],[730,470],[773,475],[797,513],[810,507],[865,507],[885,520],[908,520],[930,552],[950,465],[975,308],[997,308],[1020,370],[1042,508],[1065,462],[1110,465],[1132,515],[1155,578],[1175,520],[1197,520],[1222,422],[1243,475],[1265,475],[1287,578]],
    red: [[0,578],[10,562],[30,562],[55,478],[78,675],[100,503],[125,775],[145,445],[170,730],[190,605],[213,662],[258,588],[280,732],[303,747],[325,630],[345,435],[372,435],[390,450],[415,670],[438,520],[460,635],[482,410],[503,603],[525,475],[547,450],[570,130],[597,290],[640,707],[660,660],[683,555],[705,670],[730,530],[773,535],[797,572],[810,568],[840,535],[865,535],[885,550],[908,570],[930,645],[950,550],[973,355],[997,385],[1020,440],[1042,675],[1065,548],[1085,552],[1110,525],[1132,620],[1155,747],[1175,630],[1197,623],[1222,458],[1243,565],[1265,570],[1287,708],[1312,708],[1330,723]]
};

function scale(list, offset) {
    return list.map(function(p) {
        return [Math.round(offset + p[0] / 1.742), Math.round(1020 + p[1] / 3)];
    });
}

function drawLow() {
    var s = '';
    s += grid(1064) + grid(1114) + grid(1164);
    s += tick(1089) + tick(1139) + tick(1189);
    s += grid(1213, 1663);
    s += axisLabel(1064, '45000') + axisLabel(1114, '30000') + axisLabel(1164, '15000') + axisLabel(1213, '0');
    s += axisLine(1031, 1281);
    s += '<line x1="4" x2="1663" y1="1213" y2="1213" stroke="#a0a0a0" stroke-width="2"/>';
    s += '<rect x="1711" y="1259" width="39" height="22" fill="none" stroke="#a00000" stroke-width="1.5"/>';
    s += text(1715, 1277, 'X10', AXIS_TEXT);
    var yellow = scale(lowA.yellow, 0).concat(scale(lowB.yellow, 900));
    var red = scale(lowA.red, 0).concat(scale(lowB.red, 900));
    s += line(yellow, '#e0e000', 1.6);
    s += line(red, '#e00000', 1.4);
    document.getElementById('chart-low').innerHTML = s;
}

function drawDates() {
    var s = '';
    [107, 366, 571, 712, 830, 853, 1150, 1396, 1603, 1711].forEach(function(x) {
        s += '<line x1="' + x + '" x2="' + x + '" y1="0" y2="21" stroke="' + LINE_RED + '" stroke-width="1.5"/>';
    });
    for (var x = 45; x < 1700; x += 64) {
        s += '<line x1="' + x + '" x2="' + x + '" y1="0" y2="4" stroke="' + LINE_RED + '"/>';
    }
    s += rect(713, 0, 117, 21, '#000080');
    var items = [[7,'2021年'],[110,'9'],[368,'10'],[573,'11'],[855,'12'],[1153,'1'],[1399,'2'],[1606,'3']];
    items.forEach(function(d) { s += text(d[0], 17, d[1], AXIS_TEXT); });
    s += text(716, 17, '2021/11/16/二', '#c0c8e8');
    s += text(1728, 17, '日线', '#c0c0c0');
    document.getElementById('date-axis').innerHTML = s;
}

drawMain();
drawMid();
drawLow();
drawDates();
```
